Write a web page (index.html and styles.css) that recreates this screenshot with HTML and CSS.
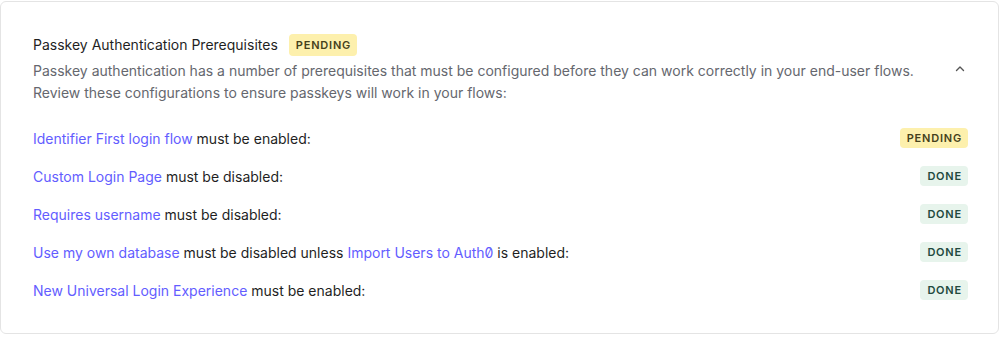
FILE: index.html
```html
<!DOCTYPE html>
<html lang="en">
<head>
    <meta charset="UTF-8">
    <meta name="viewport" content="width=device-width, initial-scale=1.0">
    <title>Passkey Prerequisites</title>
    <link rel="stylesheet" href="styles.css">
</head>
<body>
    <div class="card">
        <!-- Header -->
        <div class="card-header">
            <div class="header-text">
                <div class="title-row">
                    <span class="title">Passkey Authentication Prerequisites</span>
                    <span class="badge badge-pending badge-lg">PENDING</span>
                </div>
                <p class="description">
                    Passkey authentication has a number of prerequisites that must be configured before they can work correctly in your end-user flows.<br>
                    Review these configurations to ensure passkeys will work in your flows:
                </p>
            </div>
            <button class="toggle" aria-label="Collapse">
                <svg width="16" height="16" viewBox="0 0 16 16" fill="none">
                    <path d="M4.5 9.5 L8 6 L11.5 9.5" stroke="#555" stroke-width="1.4" stroke-linecap="round" stroke-linejoin="round"/>
                </svg>
            </button>
        </div>

        <!-- Checklist -->
        <ul class="checklist">
            <li class="check-item">
                <span><a href="#">Identifier First login flow</a> must be enabled:</span>
                <span class="badge badge-pending">PENDING</span>
            </li>
            <li class="check-item">
                <span><a href="#">Custom Login Page</a> must be disabled:</span>
                <span class="badge badge-done">DONE</span>
            </li>
            <li class="check-item">
                <span><a href="#">Requires username</a> must be disabled:</span>
                <span class="badge badge-done">DONE</span>
            </li>
            <li class="check-item">
                <span><a href="#">Use my own database</a> must be disabled unless <a href="#" class="zero">Import Users to Auth0</a> is enabled:</span>
                <span class="badge badge-done">DONE</span>
            </li>
            <li class="check-item">
                <span><a href="#">New Universal Login Experience</a> must be enabled:</span>
                <span class="badge badge-done">DONE</span>
            </li>
        </ul>
    </div>
</body>
</html>
```

FILE: styles.css
```css
 * { margin: 0; padding: 0; box-sizing: border-box; }
 body {
     font-family: 'Inter', 'Noto Sans', sans-serif;
     font-size: 14px;
     background-color: #fff;
     color: #1f1f1f;
     padding-top: 1px;
 }
 .card {
     width: 999px;
     height: 333px;
     border: 1px solid #e4e4e4;
     border-radius: 6px;
     padding: 32px 30px 0 32px;
 }
 .card-header {
     display: flex;
     align-items: center;
     justify-content: space-between;
 }
 .title-row {
     display: flex;
     align-items: center;
     gap: 11px;
     height: 22px;
     margin-bottom: 4px;
 }
 .title {
     color: #1f1f1f;
     line-height: 22px;
 }
 .description {
     color: #65676e;
     line-height: 22px;
 }
 .toggle {
     background: none;
     border: none;
     width: 16px;
     height: 16px;
     display: flex;
     cursor: pointer;
 }
 .badge {
     display: inline-flex;
     align-items: center;
     justify-content: center;
     height: 20px;
     padding: 0 6px 0 7px;
     border-radius: 4px;
     font-size: 11px;
     font-weight: 600;
     letter-spacing: 0.8px;
 }
 .badge-lg {
     height: 22px;
 }
 .badge-pending {
     background-color: #fdf0ad;
     color: #45401c;
 }
 .badge-done {
     background-color: #e7f4ec;
     color: #22493e;
 }
 .checklist {
     list-style: none;
     margin-top: 15px;
 }
 .check-item {
     display: flex;
     align-items: center;
     justify-content: space-between;
     height: 38px;
 }
 .check-item a {
     color: #635dff;
     text-decoration: none;
 }
 .zero {
     font-feature-settings: "zero" 1;
 }
```
